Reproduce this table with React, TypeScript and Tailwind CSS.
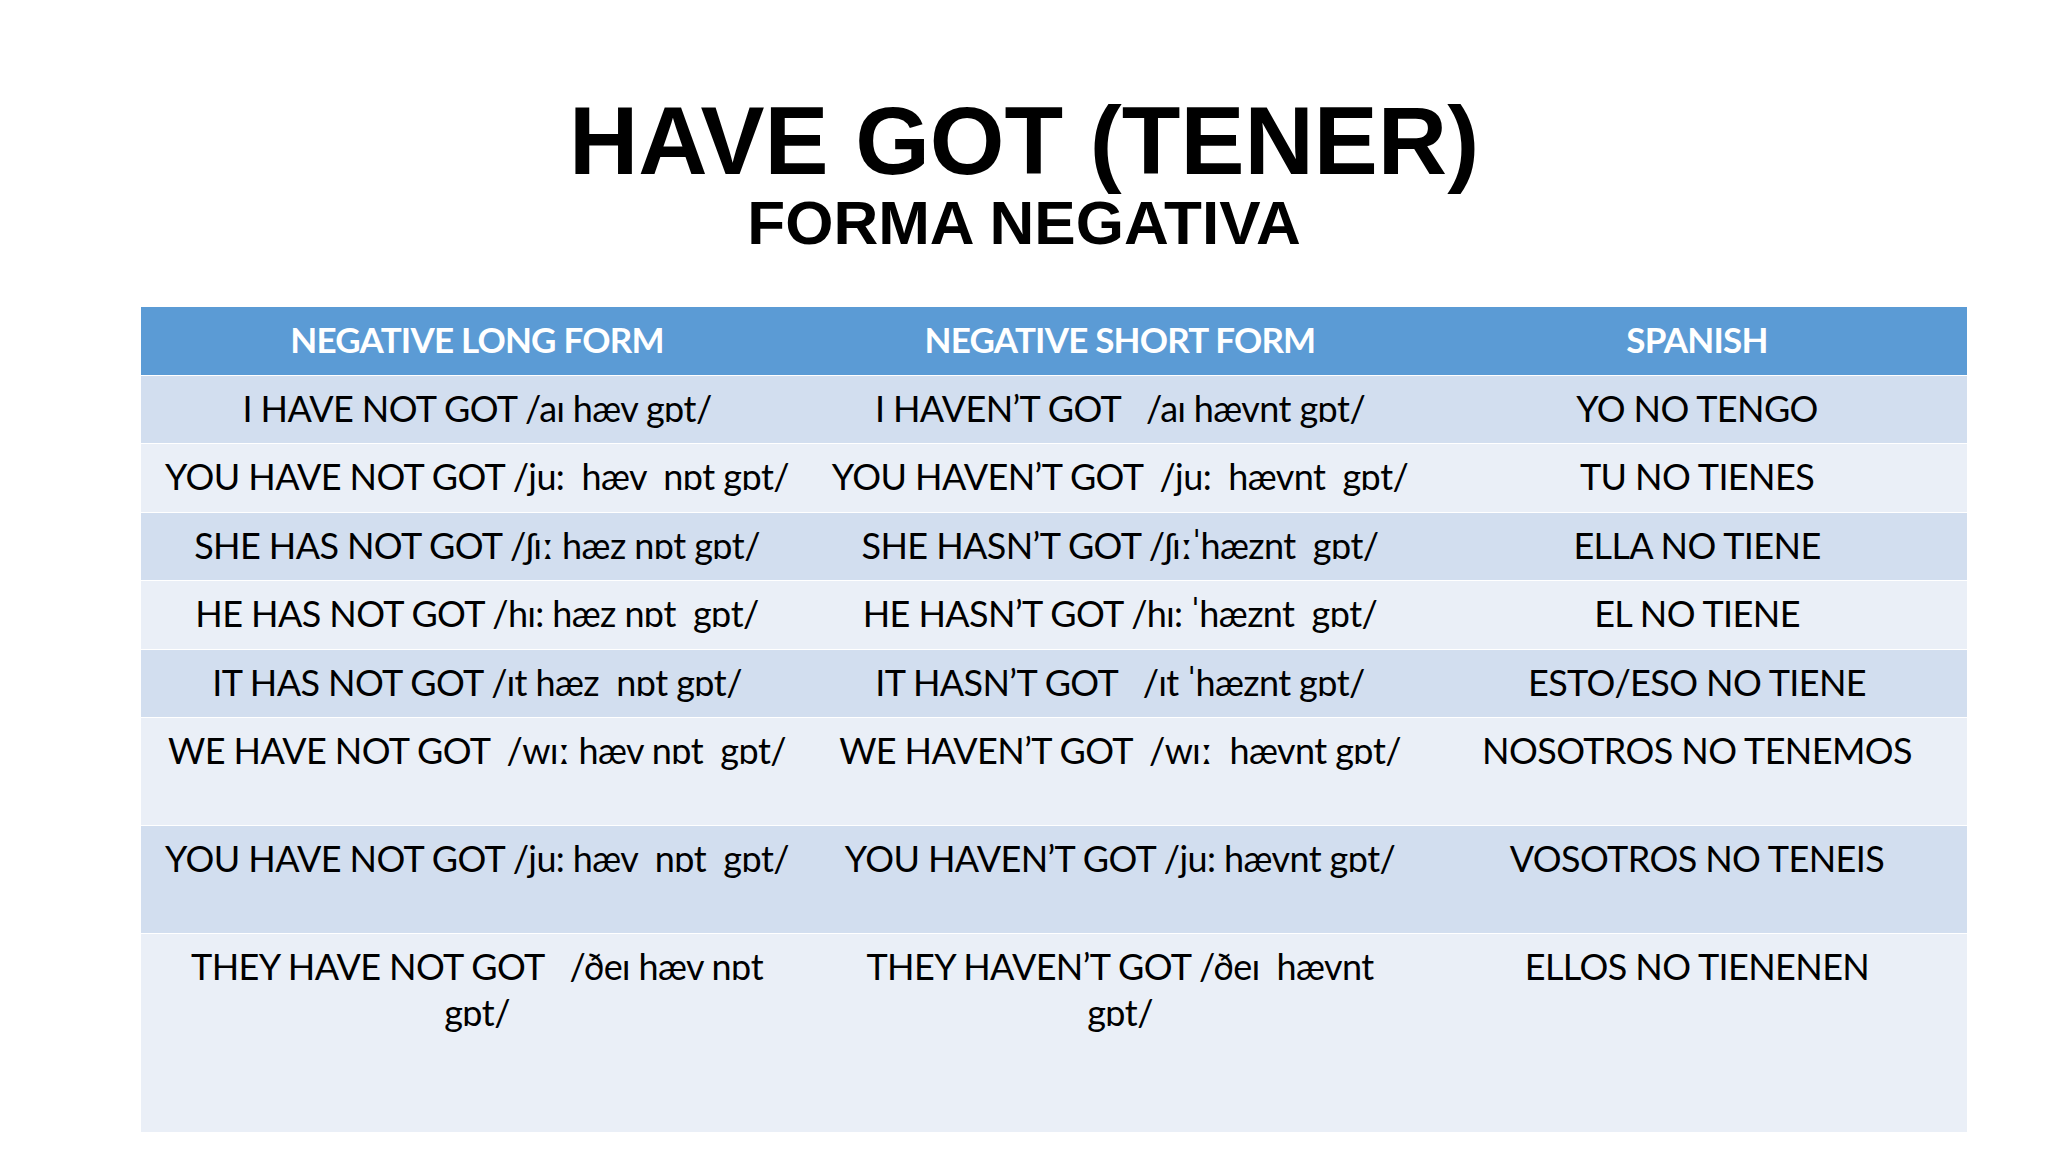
import React from 'react';

type Row = { long: string; short: string; es: string; h: string };

const rows: Row[] = [
  { long: 'I HAVE NOT GOT /aɪ hæv gɒt/', short: 'I HAVEN’T GOT   /aɪ hævnt gɒt/', es: 'YO NO TENGO', h: 'h-[68px]' },
  { long: 'YOU HAVE NOT GOT /ju:  hæv  nɒt gɒt/', short: 'YOU HAVEN’T GOT  /ju:  hævnt  gɒt/', es: 'TU NO TIENES', h: 'h-[69px]' },
  { long: 'SHE HAS NOT GOT /ʃɪː hæz nɒt gɒt/', short: 'SHE HASN’T GOT /ʃɪːˈhæznt  gɒt/', es: 'ELLA NO TIENE', h: 'h-[68px]' },
  { long: 'HE HAS NOT GOT /hɪ: hæz nɒt  gɒt/', short: 'HE HASN’T GOT /hɪ: ˈhæznt  gɒt/', es: 'EL NO TIENE', h: 'h-[69px]' },
  { long: 'IT HAS NOT GOT /ɪt hæz  nɒt gɒt/', short: 'IT HASN’T GOT   /ɪt ˈhæznt gɒt/', es: 'ESTO/ESO NO TIENE', h: 'h-[68px]' },
  { long: 'WE HAVE NOT GOT  /wɪː hæv nɒt  gɒt/', short: 'WE HAVEN’T GOT  /wɪː  hævnt gɒt/', es: 'NOSOTROS NO TENEMOS', h: 'h-[108px]' },
  { long: 'YOU HAVE NOT GOT /ju: hæv  nɒt  gɒt/', short: 'YOU HAVEN’T GOT /ju: hævnt gɒt/', es: 'VOSOTROS NO TENEIS', h: 'h-[108px]' },
  { long: 'THEY HAVE NOT GOT   /ðeɪ hæv nɒt\ngɒt/', short: 'THEY HAVEN’T GOT /ðeɪ  hævnt\ngɒt/', es: 'ELLOS NO TIENENEN', h: 'h-[199px]' },
];

const cell = 'whitespace-pre text-center pt-[9px] leading-[46px]';

export default function App() {
  return (
    <div className="w-[2048px] h-[1152px] bg-white overflow-hidden">
      <div className="pt-[93px] text-center text-black font-['Liberation_Sans',Arial,sans-serif] font-bold">
        <h1 className="text-[96px] leading-none">HAVE GOT (TENER)</h1>
        <h2 className="mt-[3px] text-[62px] leading-none">FORMA NEGATIVA</h2>
      </div>

      <div className="ml-[141px] mt-[53px] w-[1826px] font-['Lato','Noto_Sans',sans-serif] text-black">
        <div className="grid grid-cols-[672px_614px_540px] h-[68px] bg-[#5b9bd5] text-white font-bold text-[35px] tracking-[-0.8px]">
          <div className={cell}>NEGATIVE LONG FORM</div>
          <div className={cell}>NEGATIVE SHORT FORM</div>
          <div className={cell}>SPANISH</div>
        </div>
        {rows.map((r, i) => (
          <div
            key={i}
            className={`grid grid-cols-[672px_614px_540px] border-t border-white text-[36px] tracking-[-0.6px] ${r.h} ${i % 2 === 0 ? 'bg-[#d2deef]' : 'bg-[#eaeff7]'}`}
          >
            <div className={cell}>{r.long}</div>
            <div className={cell}>{r.short}</div>
            <div className={cell}>{r.es}</div>
          </div>
        ))}
      </div>
    </div>
  );
}
